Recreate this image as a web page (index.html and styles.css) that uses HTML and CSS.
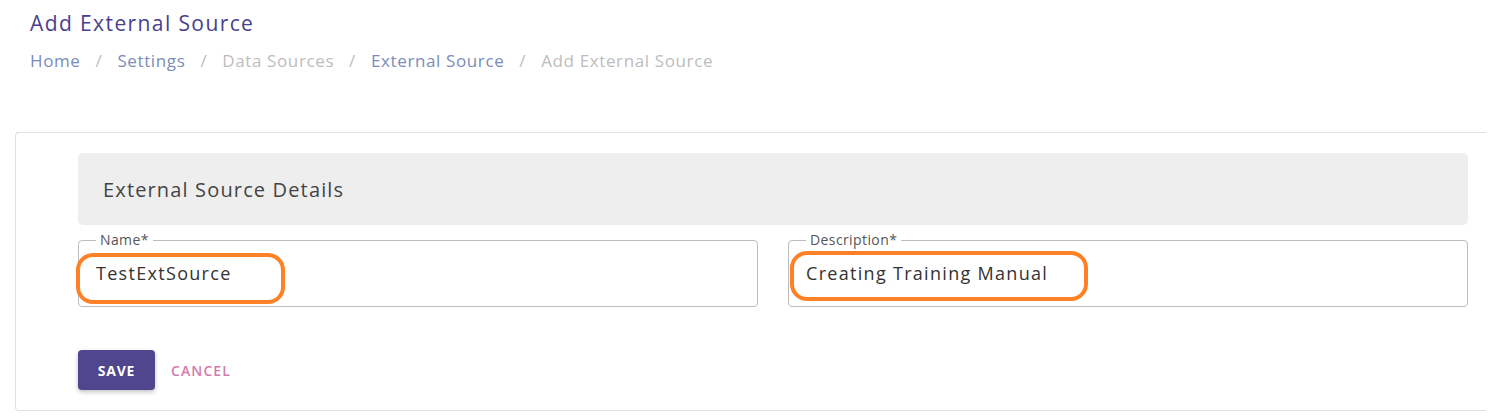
FILE: index.html
```html
<!DOCTYPE html>
<html>
<head>
<meta charset="utf-8">
<link rel="stylesheet" href="styles.css">
</head>
<body>
<header class="page-head">
  <h1 class="title">Add External Source</h1>
  <nav class="crumbs">
    <a class="crumb link">Home</a><span class="sep">/</span>
    <a class="crumb link">Settings</a><span class="sep">/</span>
    <span class="crumb muted">Data Sources</span><span class="sep">/</span>
    <a class="crumb link">External Source</a><span class="sep">/</span>
    <span class="crumb muted">Add External Source</span>
  </nav>
</header>
<section class="card">
  <div class="section-head">External Source Details</div>
  <div class="fields">
    <fieldset class="field">
      <legend class="legend">Name*</legend>
      <div class="value">TestExtSource</div>
      <span class="mark mark-name"></span>
    </fieldset>
    <fieldset class="field">
      <legend class="legend">Description*</legend>
      <div class="value">Creating Training Manual</div>
      <span class="mark mark-desc"></span>
    </fieldset>
  </div>
  <div class="actions">
    <button class="btn-save">SAVE</button>
    <button class="btn-cancel">CANCEL</button>
  </div>
</section>
</body>
</html>
```

FILE: styles.css
```css
* { box-sizing: border-box; }
body {
  margin: 0;
  background: #fff;
  font-family: "Open Sans", "Noto Sans", sans-serif;
  color: #444;
  width: 1502px;
  height: 418px;
  overflow: hidden;
}
.page-head {
  padding: 9px 0 0 30px;
}
.title {
  margin: 0;
  font-size: 21px;
  font-weight: 400;
  line-height: 28px;
  letter-spacing: 1.4px;
  color: #4a3f8d;
}
.crumbs {
  margin-top: 12px;
  display: flex;
  align-items: center;
  font-size: 17px;
  line-height: 24px;
  letter-spacing: 0.62px;
}
.crumb { white-space: nowrap; }
.link { color: #7b8cb9; }
.muted { color: #bdbdbd; }
.sep {
  color: #bdbdbd;
  margin: 0 15px;
}
.card {
  margin: 59px 0 0 15px;
  width: 1471px;
  border: 1px solid #e0e0e0;
  border-right: none;
  border-radius: 4px 0 0 4px;
  padding: 20px 18px 20px 62px;
}
.section-head {
  height: 72px;
  background: #eeeeee;
  border-radius: 5px;
  display: flex;
  align-items: center;
  padding-left: 25px;
  font-size: 20px;
  letter-spacing: 1.15px;
  color: #444;
}
.fields {
  margin-top: 8px;
  display: grid;
  grid-template-columns: 680px 680px;
  column-gap: 30px;
}
.field {
  position: relative;
  margin: 0;
  height: 74px;
  border: 1px solid #bdbdbd;
  border-radius: 4px;
  padding: 0 17px;
}
.legend {
  padding: 0 4px;
  margin-left: 0;
  font-size: 14px;
  line-height: 14px;
  letter-spacing: 0.4px;
  color: #555;
}
.value {
  margin-top: 14px;
  font-size: 18px;
  line-height: 24px;
  letter-spacing: 1.3px;
  color: #333;
}
.mark {
  position: absolute;
  border: 4px solid #ff8126;
  border-radius: 17px;
  pointer-events: none;
}
.mark-name { left: -3px; top: 6px; width: 209px; height: 51px; }
.mark-desc { left: 1px; top: 4px; width: 298px; height: 50px; }
.actions {
  margin-top: 43px;
  display: flex;
  align-items: center;
}
.btn-save {
  width: 77px;
  height: 40px;
  border: none;
  border-radius: 4px;
  background: #4f468e;
  color: #fff;
  font-family: inherit;
  font-weight: 700;
  font-size: 14px;
  letter-spacing: 0.8px;
  box-shadow: 0 2px 4px rgba(0,0,0,0.25);
}
.btn-cancel {
  margin-left: 8px;
  padding: 0 8px;
  height: 40px;
  border: none;
  background: none;
  color: #d27bae;
  font-family: inherit;
  font-weight: 600;
  font-size: 14px;
  letter-spacing: 1.1px;
}
```
